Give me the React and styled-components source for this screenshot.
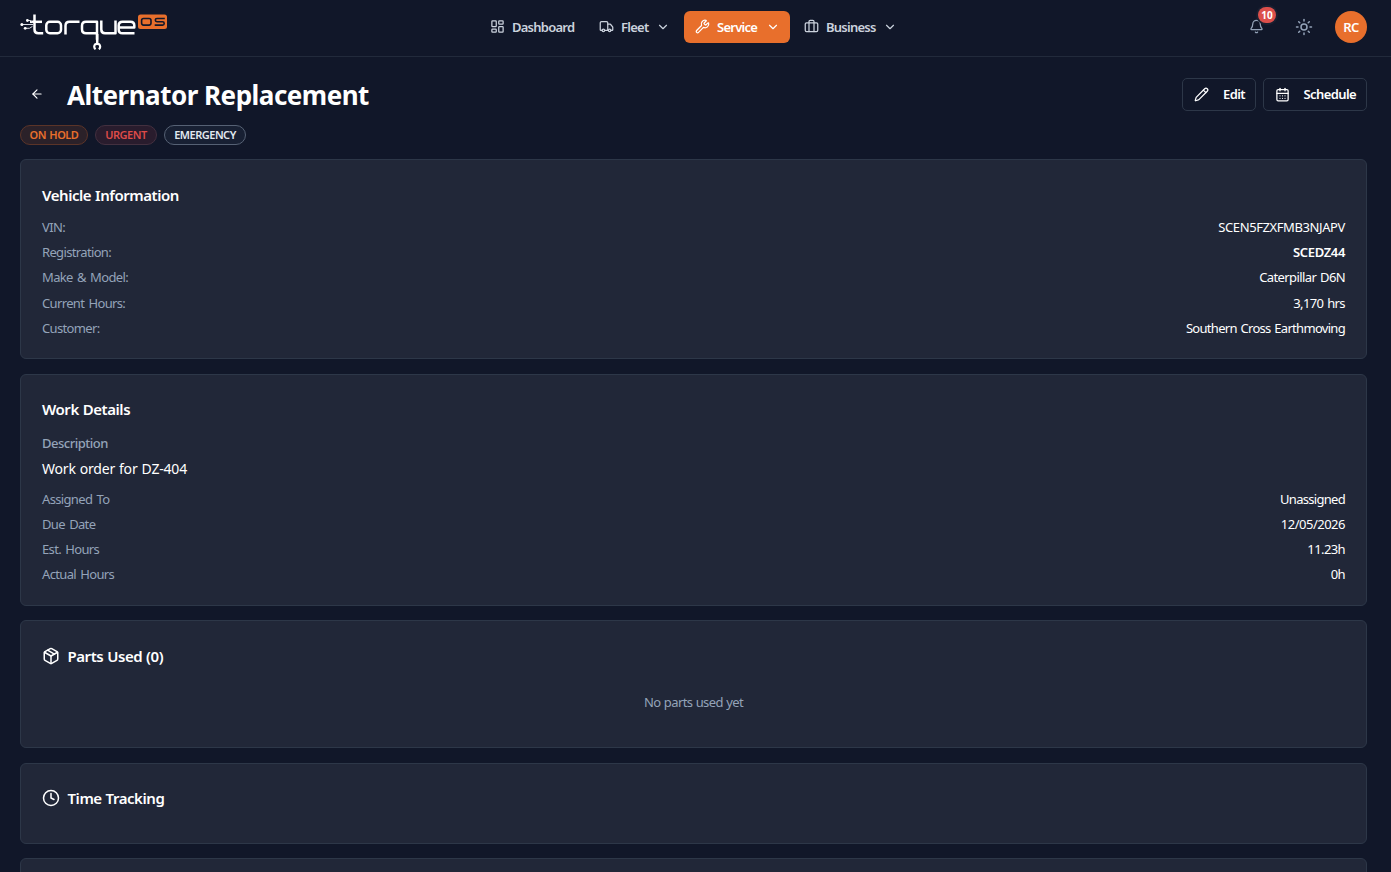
import styled, { createGlobalStyle } from "styled-components";
import {
  ArrowLeft,
  Bell,
  Briefcase,
  CalendarDays,
  ChevronDown,
  Clock,
  LayoutDashboard,
  Package,
  Pencil,
  Sun,
  Truck,
  Wrench,
} from "lucide-react";

const vehicleRows = [
  { label: "VIN:", value: "SCEN5FZXFMB3NJAPV", track: -0.4 },
  { label: "Registration:", value: "SCEDZ44", strong: true, track: -0.35 },
  { label: "Make & Model:", value: "Caterpillar D6N" },
  { label: "Current Hours:", value: "3,170 hrs" },
  { label: "Customer:", value: "Southern Cross Earthmoving", track: -0.7 },
];

const workRows = [
  { label: "Assigned To", value: "Unassigned", track: -0.7 },
  { label: "Due Date", value: "12/05/2026", track: -0.5 },
  { label: "Est. Hours", value: "11.23h" },
  { label: "Actual Hours", value: "0h" },
];

const Logo = () => {
  return (
    <LogoSvg viewBox="0 0 150 38" fill="none">
      <g stroke="#fff" strokeWidth="2.5" strokeLinejoin="round">
        <path d="M14.500 2.500v15q0 3.700 3.700 3.700h5" />
        <path d="M10 9.800h12" />
        <rect x="26.300" y="9.800" width="14.700" height="11.400" rx="3.500" />
        <path d="M45.500 22.500v-8.700q0-4 4-4h10" />
        <path d="M77 21.200h-11q-4 0-4-4v-3.400q0-4 4-4h11v18" />
        <path d="M81.300 8.600v8.900q0 3.700 3.700 3.700h10.500v-12.600" />
        <path d="M114.500 21.200h-12q-3.800 0-3.800-3.800v-3.800q0-3.800 3.800-3.800h8q3.800 0 3.800 3.800v2h-15" />
      </g>
      <path d="M77.200 22v10" stroke="#fff" strokeWidth="2.500" />
      <path
        d="M75.600 37.200a3.200 3.200 0 0 1-.4-4.900q2-1 4 0a3.200 3.200 0 0 1-.4 4.900"
        stroke="#fff"
        strokeWidth="2.200"
      />
      <g stroke="#d9dce3" strokeWidth="1">
        <path d="M2 12.500h11M7.500 8.500h3l2 2M5 16.300h4.500l3-2" />
      </g>
      <g fill="#fff">
        <circle cx="1.900" cy="12.500" r="1.500" />
        <circle cx="7.400" cy="8.500" r="1.400" />
        <circle cx="5.200" cy="16.300" r="1.400" />
      </g>
      <rect x="118" y="2.500" width="29" height="14.500" rx="2.500" fill="#e86f2c" />
      <g stroke="#111729" strokeWidth="1.600">
        <rect x="121.600" y="6.500" width="9.400" height="6.600" rx="2" />
        <path d="M144.800 6.500h-7.800q-1.700 0-1.700 1.600t1.700 1.700h5.500q1.700 0 1.700 1.600t-1.700 1.700h-7.800" />
      </g>
    </LogoSvg>
  );
};

const DetailRows = ({ rows, top }) => (
  <Rows $top={top}>
    {rows.map((row) => (
      <Row key={row.label}>
        <RowLabel>{row.label}</RowLabel>
        <RowValue $strong={row.strong} $track={row.track}>
          {row.value}
        </RowValue>
      </Row>
    ))}
  </Rows>
);

const App = () => {
  return (
    <>
      <GlobalStyle />
      <Header>
        <Logo />
        <Nav>
          <NavItem $width={107}>
            <LayoutDashboard size={15} /> <NavText>Dashboard</NavText>
          </NavItem>
          <NavItem $width={92}>
            <Truck size={15} /> <NavText>Fleet</NavText>
            <ChevronDown size={14} />
          </NavItem>
          <NavItem $active $width={106}>
            <Wrench size={15} /> <NavText>Service</NavText>
            <ChevronDown size={14} />
          </NavItem>
          <NavItem $width={114}>
            <Briefcase size={15} /> <NavText>Business</NavText>
            <ChevronDown size={14} />
          </NavItem>
        </Nav>
        <HeaderActions>
          <BellButton>
            <Bell size={15} />
            <Badge>10</Badge>
          </BellButton>
          <Sun size={18} />
          <Avatar>RC</Avatar>
        </HeaderActions>
      </Header>

      <Main>
        <TitleBar>
          <BackButton>
            <ArrowLeft size={14} />
          </BackButton>
          <Title>Alternator Replacement</Title>
          <Button $width={74}>
            <Pencil size={15} /> Edit
          </Button>
          <Button $width={104}>
            <CalendarDays size={15} /> Schedule
          </Button>
        </TitleBar>

        <Tags>
          <Tag $width={68} $color="#e86f2c" $border="#5b3428" $bg="#2b2129">
            ON HOLD
          </Tag>
          <Tag $width={62} $color="#dd4b48" $border="#43303f" $bg="#291c2d">
            URGENT
          </Tag>
          <Tag $width={82} $color="#e2e8f0" $border="#566174" $bg="#182033">
            EMERGENCY
          </Tag>
        </Tags>

        <Card $height={200}>
          <CardTitle>Vehicle Information</CardTitle>
          <DetailRows rows={vehicleRows} top={8} />
        </Card>

        <Card $height={232} $tight>
          <CardTitle>Work Details</CardTitle>
          <SubLabel>Description</SubLabel>
          <Description>Work order for DZ-404</Description>
          <DetailRows rows={workRows} top={5.9} />
        </Card>

        <Card $height={128}>
          <CardTitle>
            <Package size={18} /> Parts Used (0)
          </CardTitle>
          <Empty>No parts used yet</Empty>
        </Card>

        <Card $height={81} $tight>
          <CardTitle>
            <Clock size={18} /> Time Tracking
          </CardTitle>
        </Card>

        <Card $height={81} />
      </Main>
    </>
  );
};

export default App;

const GlobalStyle = createGlobalStyle`
  * {
    box-sizing: border-box;
  }
  html, body {
    margin: 0;
    background-color: #111729;
    color: #fff;
    font-family: "Noto Sans", "Open Sans", sans-serif;
    font-size: 13px;
  }
  #root {
    height: 872px;
    overflow: hidden;
  }
  svg {
    flex-shrink: 0;
  }
`;

const Header = styled.header`
  display: flex;
  align-items: center;
  height: 57px;
  padding: 0 24px 3px 20px;
  border-bottom: 1px solid #222a3b;
`;

const LogoSvg = styled.svg`
  width: 150px;
  height: 38px;
  margin-top: 8px;
`;

const Nav = styled.nav`
  display: flex;
  margin-left: 309px;
`;

const NavItem = styled.div`
  display: flex;
  align-items: center;
  width: ${({ $width }) => $width}px;
  height: 32px;
  margin-right: ${({ $active }) => ($active ? 3 : 2)}px;
  padding: 0 10px 0 11px;
  border-radius: 6px;
  color: ${({ $active }) => ($active ? "#fff" : "#cbd2dd")};
  background-color: ${({ $active }) => ($active ? "#e86f2c" : "transparent")};

  &:nth-child(2) {
    margin-right: 4px;
  }
`;

const NavText = styled.span`
  margin: 0 auto 0 7px;
  font-weight: 600;
  letter-spacing: -0.75px;
`;

const HeaderActions = styled.div`
  display: flex;
  align-items: center;
  margin-left: auto;
  color: #94a3b8;
`;

const BellButton = styled.div`
  position: relative;
  display: flex;
  margin-right: 31px;
`;

const Badge = styled.span`
  position: absolute;
  left: 9px;
  top: -12px;
  width: 18px;
  height: 16px;
  border-radius: 8px;
  background-color: #dc4f4b;
  box-shadow: 0 0 0 2px #1a2031;
  color: #fff;
  font-size: 10px;
  font-weight: 700;
  line-height: 16px;
  text-align: center;
`;

const Avatar = styled.div`
  width: 32px;
  height: 32px;
  margin-left: 22px;
  border-radius: 50%;
  background-color: #e86f2c;
  color: #fff;
  font-weight: 600;
  letter-spacing: -0.5px;
  line-height: 32px;
  text-align: center;
`;

const Main = styled.main`
  padding: 21px 24px 0 20px;
`;

const TitleBar = styled.div`
  display: flex;
  align-items: center;
  height: 33px;
`;

const BackButton = styled.div`
  display: flex;
  width: 47px;
  padding: 0 0 1px 10px;
`;

const Title = styled.h1`
  flex: 1;
  margin: 0;
  font-size: 26px;
  font-weight: 700;
  line-height: 32px;
  letter-spacing: -0.5px;
`;

const Button = styled.div`
  display: flex;
  align-items: center;
  justify-content: space-between;
  width: ${({ $width }) => $width}px;
  height: 33px;
  margin-left: 7px;
  padding: 0 10px 1px 11px;
  border: 1px solid #2d3748;
  border-radius: 5px;
  font-weight: 600;
  letter-spacing: -0.6px;
`;

const Tags = styled.div`
  display: flex;
  gap: 7px;
  margin: 14px 0;
`;

const Tag = styled.span`
  width: ${({ $width }) => $width}px;
  height: 20px;
  border: 1px solid ${({ $border }) => $border};
  border-radius: 10px;
  color: ${({ $color }) => $color};
  background-color: ${({ $bg }) => $bg};
  font-size: 11px;
  font-weight: 600;
  line-height: 18px;
  letter-spacing: -0.5px;
  word-spacing: 1px;
  text-align: center;
`;

const Card = styled.section`
  height: ${({ $height }) => $height}px;
  margin-bottom: ${({ $tight }) => ($tight ? 14 : 15)}px;
  padding: ${({ $tight }) => ($tight ? 22 : 23)}px 21px 0;
  border: 1px solid #2d3748;
  border-radius: 6px;
  background-color: #212738;
`;

const CardTitle = styled.h2`
  display: flex;
  align-items: center;
  gap: 7.5px;
  margin: 0;
  font-size: 15px;
  font-weight: 600;
  line-height: 24px;
  letter-spacing: -0.45px;
  word-spacing: 0.5px;
`;

const Rows = styled.div`
  padding-top: ${({ $top }) => $top}px;
`;

const Row = styled.div`
  display: flex;
  justify-content: space-between;
  height: 25.2px;
  line-height: 25px;
  word-spacing: 1px;
`;

const RowLabel = styled.span`
  color: #94a3b8;
  letter-spacing: -0.65px;
  word-spacing: 1.5px;
`;

const RowValue = styled.span`
  font-weight: ${({ $strong }) => ($strong ? 600 : 400)};
  letter-spacing: ${({ $track }) => $track ?? -0.6}px;
`;

const SubLabel = styled.div`
  margin-top: 12px;
  color: #94a3b8;
  font-weight: 500;
  line-height: 20px;
  letter-spacing: -0.5px;
`;

const Description = styled.div`
  margin-top: 4px;
  font-size: 14px;
  line-height: 24px;
  letter-spacing: -0.2px;
  word-spacing: 0.6px;
`;

const Empty = styled.div`
  margin-top: 24px;
  color: #94a3b8;
  line-height: 20px;
  letter-spacing: -0.6px;
  word-spacing: 0.5px;
  text-align: center;
`;
